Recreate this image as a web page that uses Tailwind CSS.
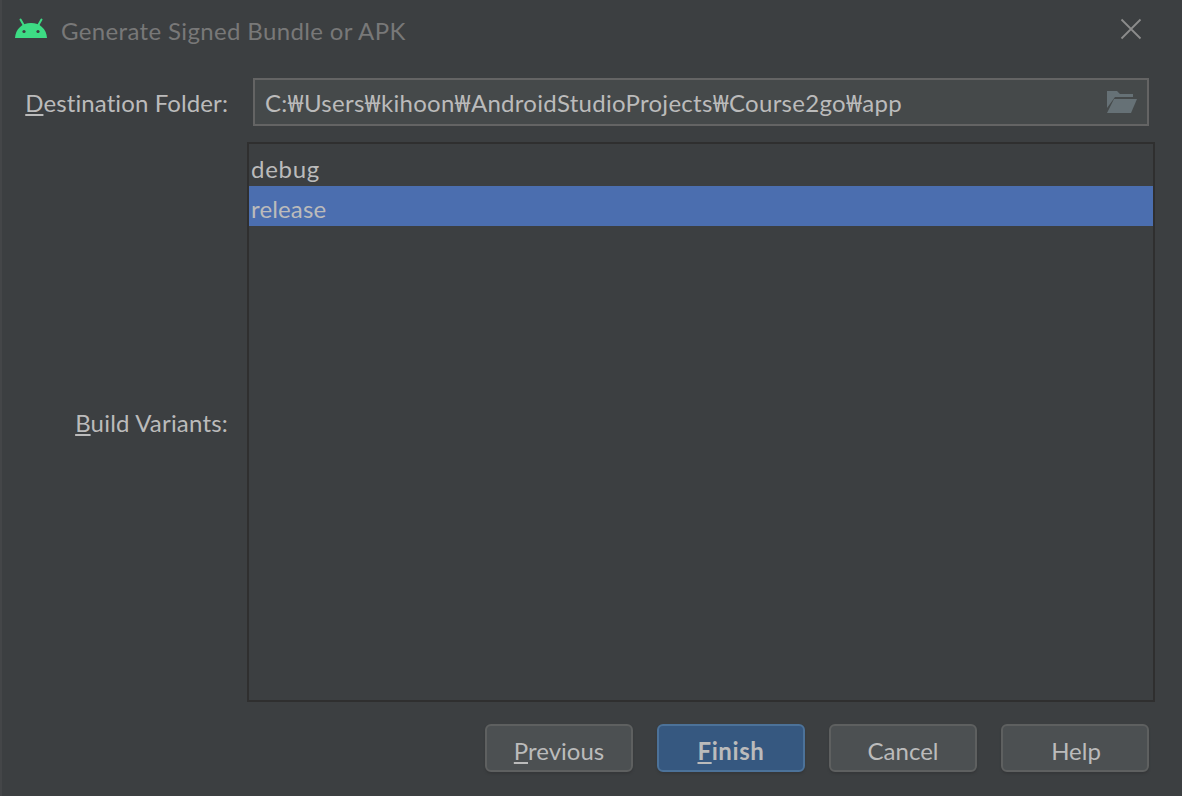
<!DOCTYPE html>
<html lang="ko">
<head>
  <meta charset="UTF-8" />
  <title>Generate Signed Bundle or APK</title>
  <script src="https://cdn.jsdelivr.net/npm/@tailwindcss/browser@4"></script>
</head>
<body class="bg-[#3c3f41]">
  <div class="relative w-[1182px] h-[796px] overflow-hidden flex flex-col bg-[#3c3f41] border-l-2 border-[#444648] text-[24px] text-[#bbbbbb] font-['Lato','Noto_Sans_CJK_KR',sans-serif]">

    <!-- stray pixels of the window behind the dialog -->
    <div class="absolute left-[-2px] top-[264px] w-[1px] h-[3px] bg-[#7f8296]"></div>
    <div class="absolute left-[-2px] top-[285px] w-[1px] h-[3px] bg-[#7f8296]"></div>
    <div class="absolute left-[-2px] top-[357px] w-[1px] h-[6px] bg-[#6a7f99]"></div>
    <div class="absolute left-[-2px] top-[385px] w-[1px] h-[20px] bg-[#8f9a3a]"></div>
    <div class="absolute left-[-2px] top-[429px] w-[1px] h-[18px] bg-[#a5603a]"></div>
    <div class="absolute left-[-2px] top-[717px] w-[1px] h-[10px] bg-[#b05050]"></div>

    <!-- title bar -->
    <div class="h-[62px] flex items-center shrink-0">
      <svg class="ml-[12px] mb-[6px]" width="34" height="22" viewBox="0 0 34 22">
        <path d="M1 21C1.6 12 8 6 17 6s15.400 6 16 15z" fill="#3ddc84" />
        <path d="M10.500 9.500 6.500 2.500M23.500 9.500l4-7" stroke="#3ddc84" stroke-width="2" stroke-linecap="round" />
        <circle cx="10" cy="14.500" r="1.600" fill="#3c3f41" />
        <circle cx="24" cy="14.500" r="1.600" fill="#3c3f41" />
      </svg>
      <span class="ml-[13px] text-[#787878] mb-[1px] tracking-[0.36px]">Generate Signed Bundle or APK</span>
      <svg class="ml-auto mr-[40px] mb-[4px]" width="22" height="22" viewBox="0 0 22 22">
        <path d="M1.500 1.500l19 19M20.500 1.500l-19 19" stroke="#8c8c8c" stroke-width="1.800" fill="none" />
      </svg>
    </div>

    <!-- form -->
    <div class="flex flex-col flex-1 pr-[27px]">
      <div class="flex items-center h-[48px] mt-[16px] pr-[6px]">
        <div class="w-[226px] text-right pt-[2px] tracking-[0.1px]"><u class="underline-offset-2">D</u>estination Folder:</div>
        <div class="ml-[25px] flex-1 h-full flex items-center bg-[#45494a] border-2 border-[#646464] pl-[10px] pr-[10px]">
          <span class="flex-1 pt-[2px] tracking-[0.28px]">C:<span class="font-['Noto_Sans']">₩</span>Users<span class="font-['Noto_Sans']">₩</span>kihoon<span class="font-['Noto_Sans']">₩</span>AndroidStudioProjects<span class="font-['Noto_Sans']">₩</span>Course2go<span class="font-['Noto_Sans']">₩</span>app</span>
          <svg width="30" height="22" viewBox="0 0 30 22">
            <path d="M0 0h10l3 3h13v3H8L0 17z" fill="#667176" />
            <path d="M7 8h23l-6 14H0z" fill="#667176" />
          </svg>
        </div>
      </div>

      <div class="flex items-center h-[560px] mt-[16px]">
        <div class="w-[226px] text-right mt-[2px] tracking-[0.2px]"><u class="underline-offset-2">B</u>uild Variants:</div>
        <div class="ml-[19px] flex-1 h-full border-2 border-[#2f2f2f] pt-[2px]">
          <div class="h-[40px] flex items-center pl-[2px] pt-[6px] tracking-[0.7px]">debug</div>
          <div class="h-[40px] flex items-center pl-[2px] pt-[6px] bg-[#4b6eaf] tracking-[0.15px]">release</div>
        </div>
      </div>

      <!-- buttons -->
      <div class="flex justify-end gap-[24px] mt-[22px] pr-[6px]">
        <button class="w-[148px] h-[48px] pt-[6px] rounded-[6px] border-2 border-[#5e6060] bg-[#4c5052] shadow-[0_2px_2px_#36383a]"><u class="underline-offset-2">P</u>revious</button>
        <button class="w-[148px] h-[48px] pt-[6px] rounded-[6px] border-2 border-[#4c7299] bg-[#365880] font-bold tracking-[0.6px] shadow-[0_2px_2px_#36383a]"><u class="underline-offset-2">F</u>inish</button>
        <button class="w-[148px] h-[48px] pt-[6px] rounded-[6px] border-2 border-[#5e6060] bg-[#4c5052] shadow-[0_2px_2px_#36383a]">Cancel</button>
        <button class="w-[148px] h-[48px] pt-[6px] pl-[2px] rounded-[6px] border-2 border-[#5e6060] bg-[#4c5052] shadow-[0_2px_2px_#36383a]">Help</button>
      </div>
    </div>
  </div>
</body>
</html>
